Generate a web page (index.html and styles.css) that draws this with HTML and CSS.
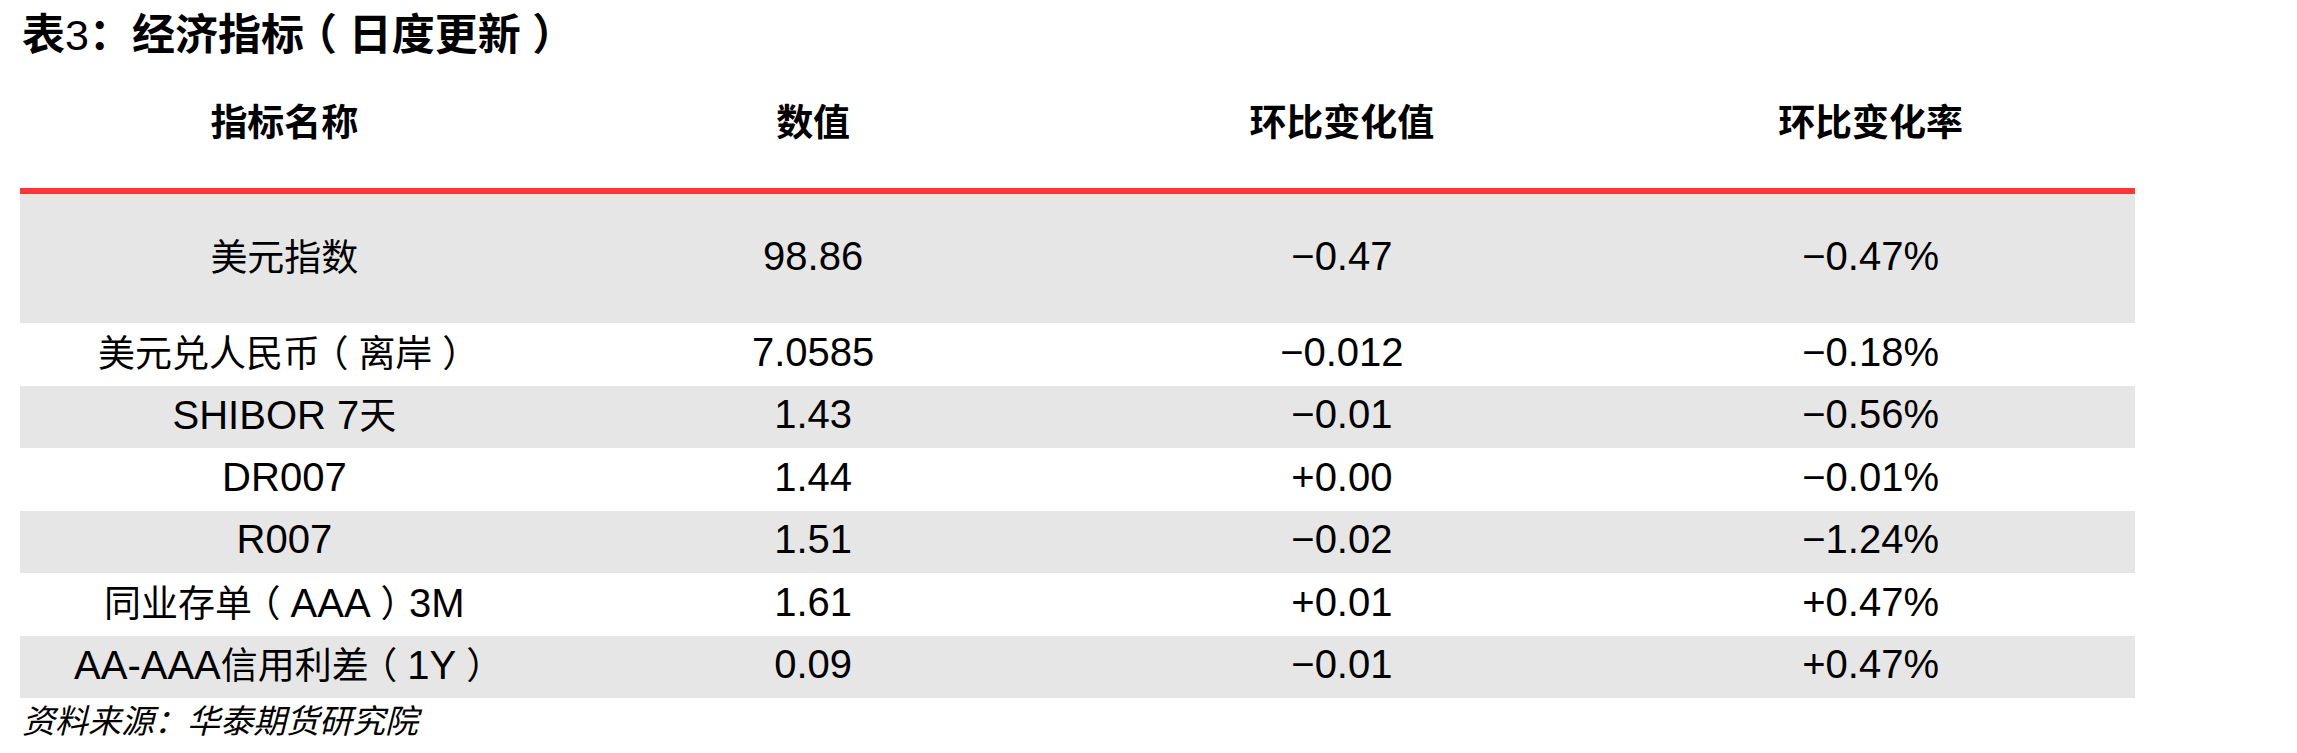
FILE: index.html
```html
<!DOCTYPE html>
<html lang="zh-CN">
<head>
<meta charset="utf-8">
<title>表3：经济指标（日度更新）</title>
<link rel="stylesheet" href="styles.css">
</head>
<body>
<div class="page">
  <h1 class="title">表<span class="lat">3</span>：经济指标<span class="pp">（</span>日度更新<span class="pp">）</span></h1>
  <div class="table">
    <div class="row head">
      <div class="cell">指标名称</div>
      <div class="cell">数值</div>
      <div class="cell">环比变化值</div>
      <div class="cell">环比变化率</div>
    </div>
    <div class="row first alt">
      <div class="cell"><span class="zh">美元指数</span></div>
      <div class="cell">98.86</div>
      <div class="cell">−0.47</div>
      <div class="cell">−0.47%</div>
    </div>
    <div class="row">
      <div class="cell"><span class="zh">美元兑人民币<span class="pp">（</span>离岸<span class="pp">）</span></span></div>
      <div class="cell">7.0585</div>
      <div class="cell">−0.012</div>
      <div class="cell">−0.18%</div>
    </div>
    <div class="row alt">
      <div class="cell">SHIBOR 7<span class="zh">天</span></div>
      <div class="cell">1.43</div>
      <div class="cell">−0.01</div>
      <div class="cell">−0.56%</div>
    </div>
    <div class="row">
      <div class="cell">DR007</div>
      <div class="cell">1.44</div>
      <div class="cell">+0.00</div>
      <div class="cell">−0.01%</div>
    </div>
    <div class="row alt">
      <div class="cell">R007</div>
      <div class="cell">1.51</div>
      <div class="cell">−0.02</div>
      <div class="cell">−1.24%</div>
    </div>
    <div class="row">
      <div class="cell"><span class="zh">同业存单<span class="pp">（</span></span>AAA<span class="zh pp">）</span>3M</div>
      <div class="cell">1.61</div>
      <div class="cell">+0.01</div>
      <div class="cell">+0.47%</div>
    </div>
    <div class="row alt">
      <div class="cell">AA-AAA<span class="zh">信用利差<span class="pp">（</span></span>1Y<span class="zh pp">）</span></div>
      <div class="cell">0.09</div>
      <div class="cell">−0.01</div>
      <div class="cell">+0.47%</div>
    </div>
  </div>
  <p class="source">资料来源：华泰期货研究院</p>
</div>
</body>
</html>
```

FILE: styles.css
```css
html, body {
  margin: 0;
  padding: 0;
  background: #ffffff;
}

body {
  font-family: "Liberation Sans", "Noto Sans CJK SC", sans-serif;
  color: #000000;
}

.page {
  width: 2297px;
  height: 753px;
  padding-left: 20px;
  box-sizing: border-box;
}

.title {
  margin: 0;
  padding: 0 0 0 2px;
  height: 56px;
  box-sizing: border-box;
  font-family: "Noto Sans CJK SC", sans-serif;
  font-size: 43px;
  line-height: 62px;
  font-weight: 700;
  letter-spacing: 0;
  white-space: nowrap;
}

.title .lat {
  font-family: "Liberation Sans", sans-serif;
  font-weight: 400;
}

/* half-width bracket glyph, centred by equal side spacing */
.pp {
  font-feature-settings: "halt";
  margin: 0 0.27em;
}

.table {
  width: 2115px;
}

.row {
  display: grid;
  grid-template-columns: repeat(4, 1fr);
  height: 62.5px;
  align-items: center;
  font-size: 40px;
  line-height: 44px;
}

.row.head {
  height: 132px;
  border-bottom: 6px solid #ff3434;
  box-sizing: content-box;
  font-family: "Noto Sans CJK SC", sans-serif;
  font-size: 37px;
  font-weight: 700;
}

.row.first {
  height: 129px;
}

.row.alt {
  background: #e6e6e6;
}

.cell {
  text-align: center;
  white-space: nowrap;
  padding-bottom: 5px;
}

.zh {
  font-family: "Noto Sans CJK SC", sans-serif;
  font-size: 37px;
}

.source {
  margin: 0;
  padding-left: 2px;
  font-family: "Noto Sans CJK SC", sans-serif;
  font-size: 33px;
  line-height: 42px;
  font-style: italic;
}
```
